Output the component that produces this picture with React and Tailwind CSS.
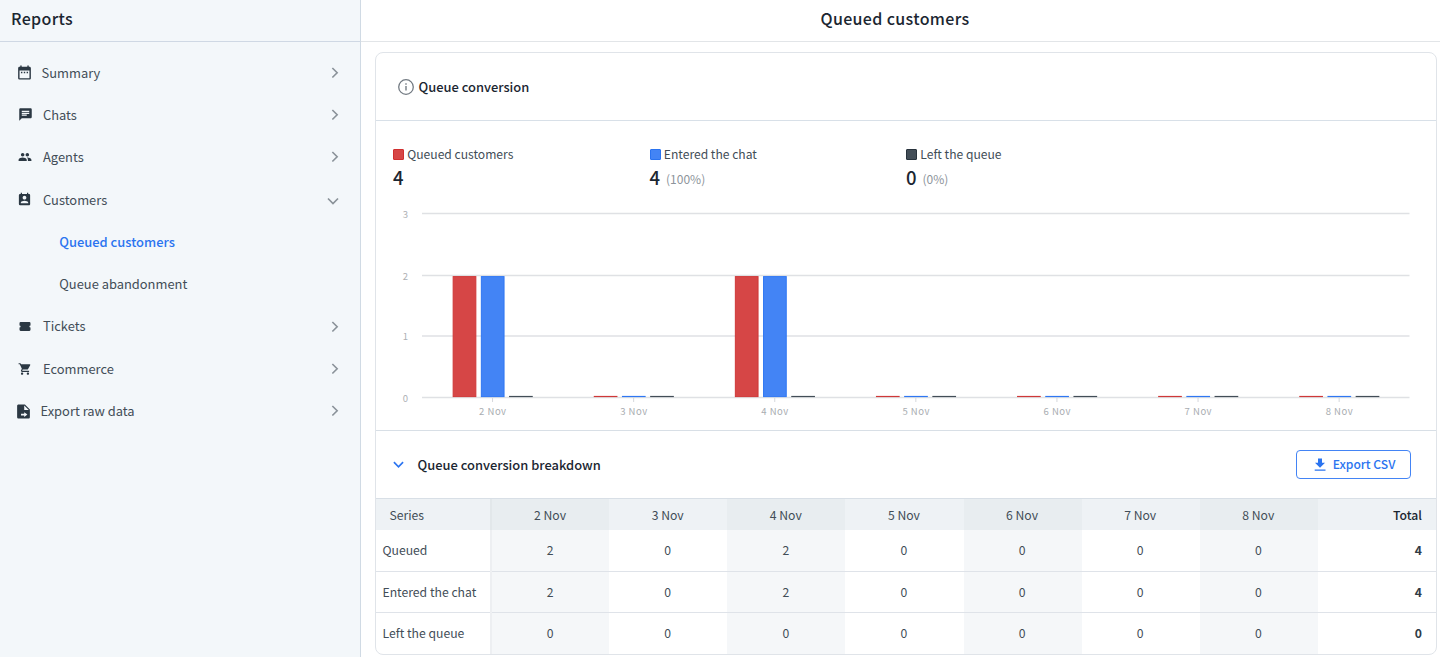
import React from "react";
import {
  MdDateRange,
  MdChat,
  MdPeople,
  MdPermContactCalendar,
  MdShoppingCart,
} from "react-icons/md";

const TicketIcon = ({ className }) => (
  <svg viewBox="0 0 24 20" fill="currentColor" className={className}>
    <path d="M4 2a2 2 0 0 0-2 2v4a2 2 0 0 1 0 4v4a2 2 0 0 0 2 2h16a2 2 0 0 0 2-2v-4a2 2 0 0 1 0-4V4a2 2 0 0 0-2-2H4z" />
  </svg>
);

const FileExportIcon = ({ className }) => (
  <svg viewBox="0 0 24 24" fill="currentColor" className={className}>
    <path d="M5 2c-1.1 0-2 .9-2 2v16c0 1.100.9 2 2 2h14c1.100 0 2-.9 2-2V9l-7-7H5zm8 1.500L19.500 10H13V3.500zM8.500 15.200h4.500V13l4.500 3.400-4.500 3.400V17.600H8.500v-2.400z" />
  </svg>
);

const DownloadIcon = ({ className }) => (
  <svg viewBox="0 0 16 16" fill="currentColor" className={className}>
    <path d="M6 1.500h4v4.300h3L8 10.800 3 5.800h3V1.500zM2.700 12.500h10.800v1.200H2.700v-1.200z" />
  </svg>
);

const Chevron = ({ className, width = 2 }) => (
  <svg
    viewBox="0 0 12 12"
    fill="none"
    stroke="currentColor"
    strokeWidth={width}
    className={className}
  >
    <path d="M1 3.500 L6 8.500 L11 3.500" />
  </svg>
);

const menu = [
  { label: "Summary", icon: MdDateRange, iconClass: "size-[17px] ml-4", textClass: "pl-[8.5px]" },
  { label: "Chats", icon: MdChat, iconClass: "size-[15px] ml-[18px]", textClass: "pl-[10px]" },
  { label: "Agents", icon: MdPeople, iconClass: "size-[14px] ml-[18px]", textClass: "pl-[11px]" },
  {
    label: "Customers",
    icon: MdPermContactCalendar,
    iconClass: "size-[15px] ml-[17px]",
    textClass: "pl-[11px]",
    children: ["Queued customers", "Queue abandonment"],
  },
  { label: "Tickets", icon: TicketIcon, iconClass: "w-[14px] h-[11px] ml-[18px]", textClass: "pl-[11px]" },
  { label: "Ecommerce", icon: MdShoppingCart, iconClass: "size-[14px] ml-[18px]", textClass: "pl-[11px]" },
  { label: "Export raw data", icon: FileExportIcon, iconClass: "size-[17px] ml-[15px]", textClass: "pl-[8.5px]" },
];

const days = ["2 Nov", "3 Nov", "4 Nov", "5 Nov", "6 Nov", "7 Nov", "8 Nov"];

const series = [
  { name: "Queued", values: [2, 0, 2, 0, 0, 0, 0], fill: "#d64646", stroke: "#cf3838" },
  { name: "Entered the chat", values: [2, 0, 2, 0, 0, 0, 0], fill: "#4384f5", stroke: "#2f77f3" },
  { name: "Left the queue", values: [0, 0, 0, 0, 0, 0, 0], fill: "#424d57", stroke: "#424d57" },
];

const legend = [
  { label: "Queued customers", value: 4, box: "bg-[#d64646] border-[#d02f2f]" },
  { label: "Entered the chat", value: 4, percent: "(100%)", box: "bg-[#4384f5] border-[#2a73f0]" },
  { label: "Left the queue", value: 0, percent: "(0%)", box: "bg-[#424d57] border-[#27323c]" },
];

function Sidebar() {
  return (
    <aside className="w-[361px] shrink-0 border-r border-[#d0dae4] bg-[#f3f7fa]">
      <h1 className="h-[42px] border-b border-[#cfd8e4] pl-[11px] text-[16px] leading-[37px] font-medium tracking-[0.35px] text-[#1b2631]">
        Reports
      </h1>
      <nav className="pt-[9.5px] text-[12.9px] text-[#424d57]">
        {menu.map(({ label, icon: Icon, iconClass, textClass, children }) => (
          <div key={label}>
            <a href="#" className="flex h-[42.3px] items-center">
              <Icon className={`shrink-0 text-[#2b3843] ${iconClass}`} />
              <span className={`flex-1 leading-5 ${textClass}`}>{label}</span>
              {children ? (
                <Chevron className="mt-[3px] mr-[21px] size-3 text-[#8a9299]" width={1.7} />
              ) : (
                <Chevron className="mr-[19.5px] size-[11.5px] -rotate-90 text-[#8a9299]" width={1.7} />
              )}
            </a>
            {children?.map((child, i) => (
              <a
                key={child}
                href="#"
                className={`flex h-[42.3px] items-center pl-[59.3px] leading-5 ${
                  i === 0 ? "font-medium text-[#2b74f0]" : ""
                }`}
              >
                {child}
              </a>
            ))}
          </div>
        ))}
      </nav>
    </aside>
  );
}

// Grouped bars, one group per day
function Chart() {
  const step = 141.1;
  const left = 46;
  const gridY = [13.5, 75.5, 136, 197.5];
  return (
    <svg width="1060" height="230" viewBox="0 0 1060 230" className="block">
      {gridY.map((y, i) => (
        <g key={y}>
          <line x1={left} x2="1033.5" y1={y} y2={y} stroke="#dfe1e4" strokeWidth="1.3" />
          <text x="32" y={y + 4} textAnchor="end" fontSize="9.5" fill="#adb0b4">
            {3 - i}
          </text>
        </g>
      ))}
      {days.map((day, d) => {
        const cx = left + step * (d + 0.5);
        return (
          <g key={day}>
            <line x1={cx} x2={cx} y1="198" y2="202" stroke="#d5d8dc" />
            {series.map((s, i) => {
              const h = s.values[d] ? 120 : 0.2;
              return (
                <rect
                  key={s.name}
                  x={cx - 39.4 + i * 28.2}
                  y={196.6 - h}
                  width="22.7"
                  height={h}
                  fill={s.fill}
                  stroke={s.stroke}
                  strokeWidth="1"
                />
              );
            })}
            <text x={cx + 0.3} y="215" textAnchor="middle" fontSize="9.5" letterSpacing="0.5" fill="#a9adb1">
              {day}
            </text>
          </g>
        );
      })}
    </svg>
  );
}

function BreakdownTable() {
  return (
    <table className="w-full table-fixed border-collapse text-[12.2px] text-[#424d57]">
      <thead>
        <tr className="h-[31px] bg-[#eef2f5]">
          <th className="w-[115px] border-r-2 border-[#e2e7ea] pt-px pl-[13.5px] text-left font-normal">Series</th>
          {days.map((day, i) => (
            <th key={day} className={`pt-px pr-px font-normal ${i % 2 === 0 ? "bg-[#e8edf0]" : ""}`}>
              {day}
            </th>
          ))}
          <th className="pt-px pr-[14px] text-right font-medium text-[#1b2631]">Total</th>
        </tr>
      </thead>
      <tbody>
        {series.map((s) => (
          <tr key={s.name} className="h-[41.3px] border-b border-[#dfe3e9] last:border-b-0">
            <td className="border-r-2 border-[#edeff2] pl-[6.5px]">{s.name}</td>
            {s.values.map((v, i) => (
              <td key={i} className={`pr-px text-center ${i % 2 === 0 ? "bg-[#f5f7f9]" : ""}`}>
                {v}
              </td>
            ))}
            <td className="pr-[14px] text-right font-bold text-[#303b46]">
              {s.values.reduce((a, b) => a + b, 0)}
            </td>
          </tr>
        ))}
      </tbody>
    </table>
  );
}

export default function App() {
  return (
    <div className="flex h-[657px] w-[1440px] overflow-hidden bg-white font-['Noto_Sans_CJK_SC',sans-serif]">
      <Sidebar />
      <main className="min-w-0 flex-1">
        <header className="h-[42px] border-b border-[#e2e5e8] pr-[11px] text-center text-[16px] leading-[37px] font-medium tracking-[0.35px] text-[#1b2631]">
          Queued customers
        </header>
        <section className="mt-[10px] ml-[14px] w-[1062px] overflow-hidden rounded-lg border border-[#e0e4e9]">
          <div className="flex h-[68px] items-center border-b border-[#d8e0e8] pl-[22px]">
            <svg viewBox="0 0 16 16" className="size-4" fill="none" stroke="#737b83">
              <circle cx="8" cy="8" r="7.300" strokeWidth="1.300" />
              <path d="M8 7v4.500M8 4.300v1.400" strokeWidth="1.400" />
            </svg>
            <h2 className="pl-[4.5px] text-[12.9px] leading-5 font-medium text-[#1b2631]">Queue conversion</h2>
          </div>

          <div className="flex h-[79px] pt-[23px] pl-[17px]">
            {legend.map((item) => (
              <div key={item.label} className="w-[256.5px]">
                <div className="flex h-5 items-center text-[12.1px] text-[#424d57]">
                  <span className={`mr-[3.300px] size-[11px] rounded-[1px] border ${item.box}`} />
                  {item.label}
                </div>
                <div className="flex h-[29px] items-center">
                  <span className="-mt-[2px] text-[18.5px] leading-none font-medium text-[#1b2631]">{item.value}</span>
                  {item.percent && (
                    <span className="pl-[6px] text-[12px] leading-none text-[#8d949b]">{item.percent}</span>
                  )}
                </div>
              </div>
            ))}
          </div>

          <Chart />

          <div className="flex h-[69px] items-center border-y border-[#d8dfe6] pr-[25px] pl-[17px]">
            <Chevron className="size-[11px] text-[#2b74f0]" width={1.8} />
            <h2 className="flex-1 pl-[13.5px] text-[12.9px] leading-5 font-medium text-[#1b2631]">
              Queue conversion breakdown
            </h2>
            <button className="flex h-[29px] w-[115px] items-center justify-center rounded border border-[#4384f5] text-[12.1px] font-medium text-[#2b74f0]">
              <DownloadIcon className="mr-[5px] size-4" />
              Export CSV
            </button>
          </div>
          <BreakdownTable />
        </section>
      </main>
    </div>
  );
}
